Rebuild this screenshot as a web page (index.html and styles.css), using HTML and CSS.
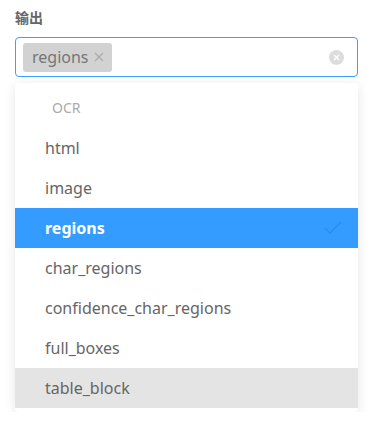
FILE: index.html
```html
<!DOCTYPE html>
<html lang="zh">
<head>
  <meta charset="UTF-8" />
  <meta name="viewport" content="width=device-width, initial-scale=1.0"/>
  <title>输出</title>
  <link rel="stylesheet" href="styles.css">
</head>
<body>
  <div class="field">
    <label class="field-label">输出</label>

    <div class="select-box">
      <span class="tag">regions
        <svg class="tag-close" width="10" height="10" viewBox="0 0 10 10">
          <path d="M1 1 L9 9 M9 1 L1 9" stroke="#aaa" stroke-width="1.1"/>
        </svg>
      </span>
      <span class="clear">
        <svg width="15" height="15" viewBox="0 0 15 15">
          <circle cx="7.5" cy="7.5" r="7.5" fill="#dcdcdc"/>
          <path d="M5 5 L10 10 M10 5 L5 10" stroke="#fff" stroke-width="1.2"/>
        </svg>
      </span>
    </div>

    <div class="dropdown">
      <div class="group-title">OCR</div>
      <div class="option">html</div>
      <div class="option">image</div>
      <div class="option selected">
        regions
        <svg class="check" width="18" height="14" viewBox="0 0 18 14">
          <path d="M1 7 L6 12 L17 1" fill="none" stroke="#2a8ef0" stroke-width="1.5"/>
        </svg>
      </div>
      <div class="option">char_regions</div>
      <div class="option">confidence_char_regions</div>
      <div class="option">full_boxes</div>
      <div class="option hover">table_block</div>
    </div>
  </div>
</body>
</html>
```

FILE: styles.css
```css
body {
  margin: 0;
  padding: 8px 13px 0 15px;
  background-color: #ffffff;
  font-family: "Noto Sans", "Noto Sans CJK SC", sans-serif;
}

.field-label {
  display: block;
  font-size: 14px;
  font-weight: bold;
  color: #666;
  line-height: 20px;
  margin-bottom: 9px;
}

.select-box {
  display: flex;
  align-items: center;
  height: 40px;
  box-sizing: border-box;
  border: 1px solid #409eff;
  border-radius: 4px;
  padding: 0 13px 0 7px;
}

.tag {
  display: flex;
  align-items: center;
  height: 29px;
  padding: 0 8px 0 9px;
  background-color: #d2d2d2;
  border-radius: 3px;
  font-size: 16px;
  color: #777;
}

.tag-close {
  margin-left: 5px;
}

.clear {
  margin-left: auto;
  display: flex;
}

.dropdown {
  margin-top: 6px;
  background-color: #fff;
  border-radius: 4px;
  box-shadow: 0 2px 12px rgba(0, 0, 0, 0.1);
  padding: 4px 0;
}

.group-title {
  height: 41px;
  line-height: 41px;
  padding-left: 37px;
  font-size: 14px;
  color: #aaa;
}

.option {
  display: flex;
  align-items: center;
  height: 40px;
  padding: 0 16px 0 30px;
  font-size: 16px;
  color: #666;
}

.option.selected {
  background-color: #349cff;
  color: #fff;
  font-weight: bold;
}

.check {
  margin-left: auto;
}

.option.hover {
  background-color: #e4e4e4;
}
```
